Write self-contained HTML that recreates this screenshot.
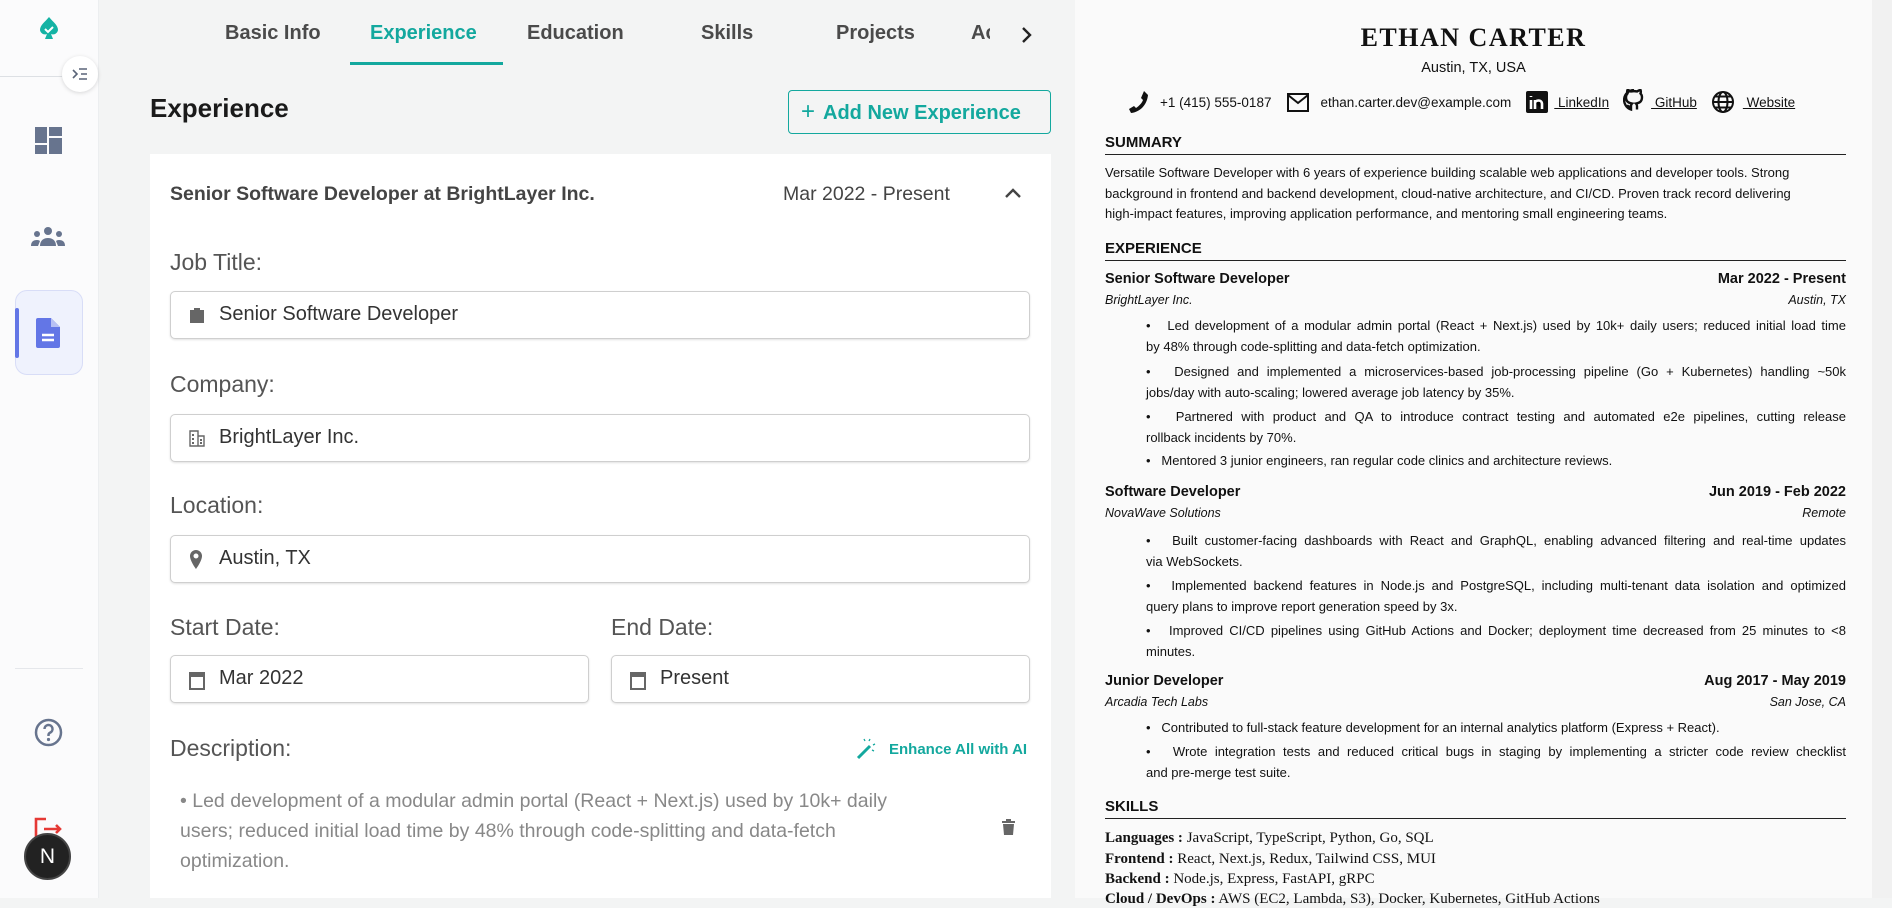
<!DOCTYPE html>
<html><head><meta charset="utf-8"><style>
*{box-sizing:border-box;margin:0;padding:0}
body{width:1892px;height:898px;overflow:hidden;background:#f3f4f4;font-family:"Liberation Sans",sans-serif;position:relative}
.a{position:absolute}
.side{left:0;top:0;width:99px;height:898px;background:#fbfbfc;border-right:1px solid #eceef0}
.tab{top:22px;font-size:20px;color:#4a4a4a;font-weight:600}
.lbl{left:170px;font-size:23px;color:#555}
.inp{background:#fff;border:1.5px solid #cfcfcf;border-radius:5px;height:48px;box-shadow:0 1px 2px rgba(0,0,0,.12);font-size:20px;color:#333;padding-left:48px;line-height:45px}
.inp svg{position:absolute;left:18px;top:14px}
.r{font-family:"Liberation Sans",sans-serif;color:#111}
.h{left:1105px;width:741px;font-size:15px;font-weight:bold;border-bottom:1.5px solid #222;padding-bottom:3px}
.jt{left:1105px;width:741px;font-size:14.5px;font-weight:bold;display:flex;justify-content:space-between}
.co{left:1105px;width:741px;font-size:12.5px;font-style:italic;display:flex;justify-content:space-between}
.b{left:1146px;width:700px;font-size:13px;line-height:20.5px;white-space:nowrap}
.b .j{text-align:justify;text-align-last:justify}
.sum{left:1105px;width:741px;font-size:13px;line-height:20.5px}
.sk{left:1105px;font-family:"Liberation Serif",serif;font-size:15px}
</style></head><body>
<div class="a side"></div>
<svg class="a" style="left:38px;top:16px" width="22" height="26" viewBox="0 0 22 26"><path d="M11 1C7 6 2 9 2 14a5 5 0 0 0 7 4l-2 5h8l-2-5a5 5 0 0 0 7-4c0-5-5-8-9-13z" fill="#14b3a4"/><path d="M7 13l3 3 5-5" stroke="#fff" stroke-width="2" fill="none"/></svg>
<div class="a" style="left:0;top:76px;width:62px;border-top:1px solid #dde0e4"></div>
<div class="a" style="left:62px;top:56px;width:36px;height:36px;border-radius:50%;background:#fff;box-shadow:0 1px 4px rgba(0,0,0,.15)"></div>
<svg class="a" style="left:72px;top:67px" width="16" height="14" viewBox="0 0 16 14"><path d="M1 3l4 4-4 4M7 2h8M9 7h6M7 12h8" stroke="#5a6478" stroke-width="1.6" fill="none"/></svg>
<svg class="a" style="left:35px;top:127px" width="27" height="27" viewBox="0 0 27 27" fill="#67748e"><rect x="0" y="0" width="12" height="16"/><rect x="14" y="0" width="13" height="9"/><rect x="0" y="18" width="12" height="9"/><rect x="14" y="11" width="13" height="16"/></svg>
<svg class="a" style="left:31px;top:226px" width="34" height="20" viewBox="0 0 34 20" fill="#67748e"><circle cx="17" cy="5" r="4"/><circle cx="6" cy="8" r="3"/><circle cx="28" cy="8" r="3"/><path d="M9 20c0-6 4-8 8-8s8 2 8 8zM0 20c0-4 2-6 6-6 2 0 3 1 3 1l-2 5zM34 20c0-4-2-6-6-6-2 0-3 1-3 1l2 5z"/></svg>
<div class="a" style="left:15px;top:290px;width:68px;height:85px;background:#eff2fd;border:1px solid #d8ddf7;border-radius:12px"></div>
<div class="a" style="left:15px;top:308px;width:4px;height:50px;background:#6376e6;border-radius:2px"></div>
<svg class="a" style="left:36px;top:318px" width="24" height="30" viewBox="0 0 24 30"><path d="M2 0h13l9 9v19a2 2 0 0 1-2 2H2a2 2 0 0 1-2-2V2a2 2 0 0 1 2-2z" fill="#6376e6"/><path d="M15 0v9h9z" fill="#b7c0f4"/><path d="M6 17h12M6 22h12" stroke="#fff" stroke-width="2.4"/></svg>
<div class="a" style="left:15px;top:668px;width:68px;border-top:1px solid #e5e7eb"></div>
<svg class="a" style="left:34px;top:718px" width="29" height="29" viewBox="0 0 29 29"><circle cx="14.5" cy="14.5" r="12.5" stroke="#67748e" stroke-width="2.5" fill="none"/><path d="M10.5 11a4 4 0 1 1 5.5 3.7c-1 .5-1.5 1.3-1.5 2.3v1" stroke="#67748e" stroke-width="2.5" fill="none"/><circle cx="14.5" cy="21.5" r="1.6" fill="#67748e"/></svg>
<svg class="a" style="left:34px;top:817px" width="30" height="22" viewBox="0 0 30 22"><path d="M12 2H2v20M10 12h16M22 8l4 4-4 4" stroke="#e53935" stroke-width="2.6" fill="none"/></svg>
<div class="a" style="left:24px;top:833px;width:47px;height:47px;border-radius:50%;background:#222;border:2px solid #444;color:#fff;font-size:21px;text-align:center;line-height:43px">N</div>
<div class="a tab" style="left:225px">Basic Info</div>
<div class="a tab" style="left:370px;color:#13a89e">Experience</div>
<div class="a" style="left:350px;top:62px;width:153px;height:3px;background:#13a89e"></div>
<div class="a tab" style="left:527px">Education</div>
<div class="a tab" style="left:701px">Skills</div>
<div class="a tab" style="left:836px">Projects</div>
<div class="a tab" style="left:971px;width:19px;overflow:hidden">Achievements</div>
<svg class="a" style="left:1020px;top:26px" width="12" height="18" viewBox="0 0 12 18"><path d="M3 2l7 7-7 7" stroke="#222" stroke-width="2.4" fill="none"/></svg>
<div class="a" style="left:150px;top:93px;font-size:26px;font-weight:bold;color:#1a1a1a">Experience</div>
<div class="a" style="left:788px;top:90px;width:263px;height:44px;border:1.5px solid #13a89e;border-radius:4px;color:#13a89e;font-size:20px;font-weight:600;line-height:41px;padding-left:12px"><span style="font-weight:400;font-size:24px;margin-right:8px">+</span>Add New Experience</div>
<div class="a" style="left:150px;top:154px;width:901px;height:744px;background:#fff"></div>
<div class="a" style="left:170px;top:183px;font-size:19.5px;font-weight:bold;color:#444">Senior Software Developer at BrightLayer Inc.</div>
<div class="a" style="left:783px;top:183px;font-size:19.5px;color:#444">Mar 2022 - Present</div>
<svg class="a" style="left:1004px;top:187px" width="18" height="12" viewBox="0 0 18 12"><path d="M2 10l7-7 7 7" stroke="#444" stroke-width="2.4" fill="none"/></svg>
<div class="a lbl" style="top:249px">Job Title:</div>
<div class="a inp" style="left:170px;top:291px;width:860px"><svg width="16" height="18" viewBox="0 0 16 18"><path d="M5 4V2h6v2h4v13H1V4z" fill="#666"/></svg>Senior Software Developer</div>
<div class="a lbl" style="top:371px">Company:</div>
<div class="a inp" style="left:170px;top:414px;width:860px"><svg width="16" height="18" viewBox="0 0 16 18" fill="#666"><path d="M1 2h8v15H1zM9 7h6v10H9z" fill="none" stroke="#666" stroke-width="1.4"/><path d="M3 5h2v2H3zM3 9h2v2H3zM3 13h2v2H3zM11 10h2v2h-2zM11 13h2v2h-2z"/></svg>BrightLayer Inc.</div>
<div class="a lbl" style="top:492px">Location:</div>
<div class="a inp" style="left:170px;top:535px;width:860px"><svg width="14" height="20" viewBox="0 0 14 20"><path d="M7 0a6 6 0 0 0-6 6c0 5 6 13 6 13s6-8 6-13a6 6 0 0 0-6-6zm0 8.5A2.5 2.5 0 1 1 7 3.5a2.5 2.5 0 0 1 0 5z" fill="#666"/></svg>Austin, TX</div>
<div class="a lbl" style="top:614px">Start Date:</div>
<div class="a lbl" style="left:611px;top:614px">End Date:</div>
<div class="a inp" style="left:170px;top:655px;width:419px"><svg width="16" height="20" viewBox="0 0 16 20"><rect x="1" y="3" width="14" height="16" stroke="#666" stroke-width="2" fill="none"/><rect x="1" y="3" width="14" height="4" fill="#666"/></svg>Mar 2022</div>
<div class="a inp" style="left:611px;top:655px;width:419px"><svg width="16" height="20" viewBox="0 0 16 20"><rect x="1" y="3" width="14" height="16" stroke="#666" stroke-width="2" fill="none"/><rect x="1" y="3" width="14" height="4" fill="#666"/></svg>Present</div>
<div class="a lbl" style="top:735px">Description:</div>
<svg class="a" style="left:856px;top:738px" width="22" height="22" viewBox="0 0 22 22"><path d="M2 20L14 8" stroke="#13a89e" stroke-width="3"/><path d="M8 1l1 2M14 1l-1 2M19 6l-2 1M18 13l-2-1" stroke="#13a89e" stroke-width="1.3"/></svg>
<div class="a" style="left:889px;top:741px;font-size:15px;font-weight:bold;color:#13a89e">Enhance All with AI</div>
<div class="a" style="left:180px;top:786px;width:780px;font-size:19.5px;line-height:30px;color:#888;white-space:nowrap">• Led development of a modular admin portal (React + Next.js) used by 10k+ daily<br>users; reduced initial load time by 48% through code-splitting and data-fetch<br>optimization.</div>
<svg class="a" style="left:1002px;top:819px" width="13" height="16" viewBox="0 0 13 16"><path d="M0 2h13v2H0zM4 0h5v2H4zM1 5h11l-1 11H2z" fill="#666"/></svg>
<div class="a" style="left:1075px;top:0;width:797px;height:898px;background:#fafafa"></div>
<div class="a" style="left:1872px;top:0;width:20px;height:898px;background:#f1f1f1"></div>
<div class="a" style="left:1075px;top:23px;width:797px;text-align:center;font-family:'Liberation Serif',serif;font-weight:bold;font-size:26px;letter-spacing:1.5px;color:#111">ETHAN CARTER</div>
<div class="a r" style="left:1075px;top:60px;width:797px;text-align:center;font-size:14.5px">Austin, TX, USA</div>
<div class="a r" style="left:1128px;top:89px;font-size:13.5px;display:flex;align-items:center;white-space:nowrap">
<svg width="22" height="24" viewBox="0 0 22 24"><path d="M16 1l4 4c-1 10-8 17-17 18L1 19l5-3 2 2c3-2 6-5 7-8l-2-2z" fill="#111"/></svg><span style="margin:0 15px 0 10px">+1 (415) 555-0187</span>
<svg width="24" height="22" viewBox="0 0 24 22"><rect x="2" y="3" width="20" height="17" stroke="#111" stroke-width="2" fill="none"/><path d="M2 4l10 8 10-8" stroke="#111" stroke-width="2" fill="none"/></svg><span style="margin:0 15px 0 10px">ethan.carter.dev@example.com</span>
<svg width="22" height="22" viewBox="0 0 22 22"><rect width="22" height="22" rx="2" fill="#111"/><path d="M5 9v9M5 5v1M9 18V9M9 12c0-3 7-4 7 1v5" stroke="#fff" stroke-width="2.6"/></svg><span style="margin:0 14px 0 6px;text-decoration:underline">&nbsp;LinkedIn</span>
<svg width="22" height="26" viewBox="0 0 22 26"><path d="M11 1a10 10 0 0 0-3 19.5v-3c-3 .5-4-1.5-4-1.5M14 20.5V17c0-1-.5-2-1-2.5 3-.5 6-1.5 6-6.5a5 5 0 0 0-1.5-3.5 4.6 4.6 0 0 0 0-3.5s-1.5 0-3.5 1.5a12 12 0 0 0-6 0C6 1 4.5 1 4.5 1a4.6 4.6 0 0 0 0 3.5A5 5 0 0 0 3 8c0 5 3 6 6 6.5-.5.5-1 1.5-1 2.5" stroke="#111" stroke-width="2.4" fill="none"/></svg><span style="margin:0 14px 0 6px;text-decoration:underline">&nbsp;GitHub</span>
<svg width="24" height="24" viewBox="0 0 24 24" stroke="#111" stroke-width="2" fill="none"><circle cx="12" cy="12" r="10"/><ellipse cx="12" cy="12" rx="4.5" ry="10"/><path d="M2 12h20M4 6.5h16M4 17.5h16"/></svg><span style="margin-left:8px;text-decoration:underline">&nbsp;Website</span></div>
<div class="a r h" style="top:134px">SUMMARY</div>
<div class="a r sum" style="top:163px">Versatile Software Developer with 6 years of experience building scalable web applications and developer tools. Strong<br>background in frontend and backend development, cloud-native architecture, and CI/CD. Proven track record delivering<br>high-impact features, improving application performance, and mentoring small engineering teams.</div>
<div class="a r h" style="top:240px">EXPERIENCE</div>
<div class="a r jt" style="top:271px"><span>Senior Software Developer</span><span>Mar 2022 - Present</span></div>
<div class="a r co" style="top:293px"><span>BrightLayer Inc.</span><span>Austin, TX</span></div>
<div class="a r b" style="top:316px"><div class="j">•&nbsp;&nbsp; Led development of a modular admin portal (React + Next.js) used by 10k+ daily users; reduced initial load time</div><div>by 48% through code-splitting and data-fetch optimization.</div></div>
<div class="a r b" style="top:362px"><div class="j">•&nbsp;&nbsp; Designed and implemented a microservices-based job-processing pipeline (Go + Kubernetes) handling ~50k</div><div>jobs/day with auto-scaling; lowered average job latency by 35%.</div></div>
<div class="a r b" style="top:407px"><div class="j">•&nbsp;&nbsp; Partnered with product and QA to introduce contract testing and automated e2e pipelines, cutting release</div><div>rollback incidents by 70%.</div></div>
<div class="a r b" style="top:451px"><div>•&nbsp;&nbsp; Mentored 3 junior engineers, ran regular code clinics and architecture reviews.</div></div>
<div class="a r jt" style="top:484px"><span>Software Developer</span><span>Jun 2019 - Feb 2022</span></div>
<div class="a r co" style="top:506px"><span>NovaWave Solutions</span><span>Remote</span></div>
<div class="a r b" style="top:531px"><div class="j">•&nbsp;&nbsp; Built customer-facing dashboards with React and GraphQL, enabling advanced filtering and real-time updates</div><div>via WebSockets.</div></div>
<div class="a r b" style="top:576px"><div class="j">•&nbsp;&nbsp; Implemented backend features in Node.js and PostgreSQL, including multi-tenant data isolation and optimized</div><div>query plans to improve report generation speed by 3x.</div></div>
<div class="a r b" style="top:621px"><div class="j">•&nbsp;&nbsp; Improved CI/CD pipelines using GitHub Actions and Docker; deployment time decreased from 25 minutes to &lt;8</div><div>minutes.</div></div>
<div class="a r jt" style="top:673px"><span>Junior Developer</span><span>Aug 2017 - May 2019</span></div>
<div class="a r co" style="top:695px"><span>Arcadia Tech Labs</span><span>San Jose, CA</span></div>
<div class="a r b" style="top:718px"><div>•&nbsp;&nbsp; Contributed to full-stack feature development for an internal analytics platform (Express + React).</div></div>
<div class="a r b" style="top:742px"><div class="j">•&nbsp;&nbsp; Wrote integration tests and reduced critical bugs in staging by implementing a stricter code review checklist</div><div>and pre-merge test suite.</div></div>
<div class="a r h" style="top:798px">SKILLS</div>
<div class="a r sk" style="top:830px"><b>Languages :</b> JavaScript, TypeScript, Python, Go, SQL</div>
<div class="a r sk" style="top:851px"><b>Frontend :</b> React, Next.js, Redux, Tailwind CSS, MUI</div>
<div class="a r sk" style="top:871px"><b>Backend :</b> Node.js, Express, FastAPI, gRPC</div>
<div class="a r sk" style="top:891px"><b>Cloud / DevOps :</b> AWS (EC2, Lambda, S3), Docker, Kubernetes, GitHub Actions</div>
</body></html>
